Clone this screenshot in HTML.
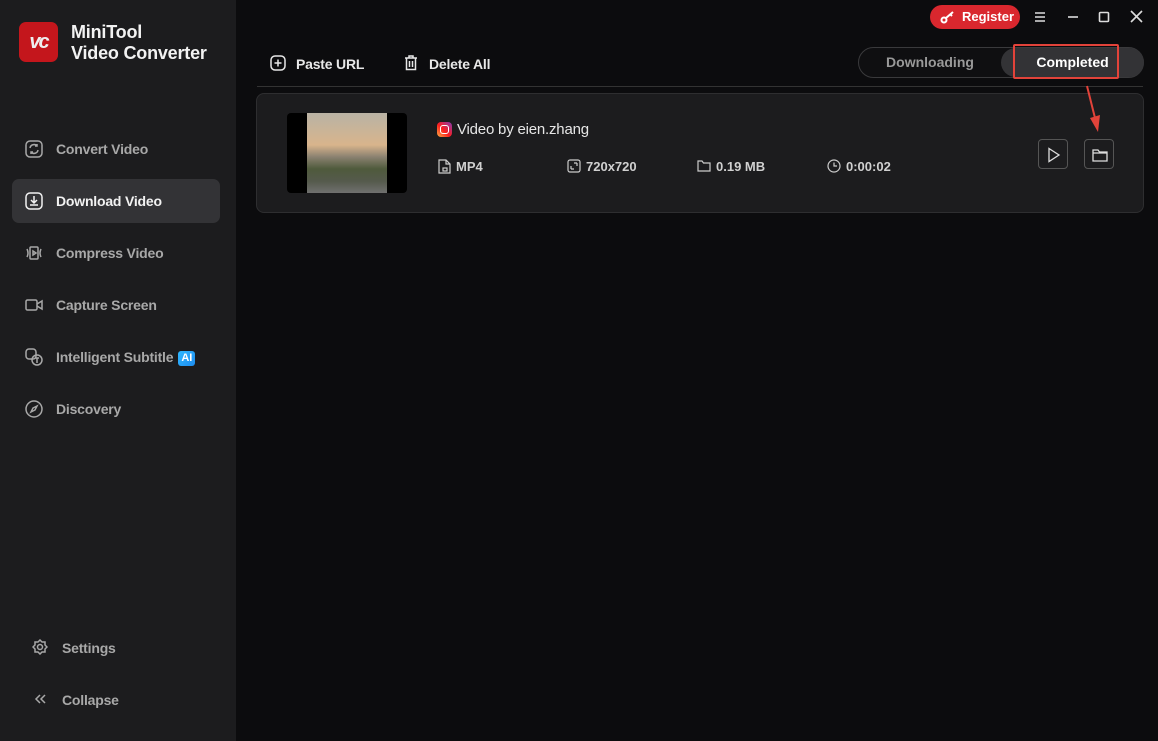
<!DOCTYPE html>
<html><head><meta charset="utf-8"><style>
*{margin:0;padding:0;box-sizing:border-box}
body{width:1158px;height:741px;background:#0c0c0e;font-family:"Liberation Sans",sans-serif;position:relative;overflow:hidden;color:#ddd}
.side{position:absolute;left:0;top:0;width:236px;height:741px;background:#1c1c1e}
.logo{position:absolute;left:19px;top:22px;width:39px;height:40px;border-radius:7px;background:#c4161c;color:#eee;font-weight:bold;font-style:italic;font-size:20px;text-align:center;line-height:40px;letter-spacing:-2px}
.brand{position:absolute;left:71px;top:22px;font-size:18px;font-weight:bold;color:#f2f2f2;line-height:21px;letter-spacing:-0.2px}
.nav{position:absolute;left:12px;width:208px;height:44px;border-radius:7px;font-size:14px;font-weight:bold;color:#a8a8a8;line-height:44px;padding-left:44px;letter-spacing:-0.2px}
.nav svg{position:absolute;left:13px;top:13px}
.nav.on{background:#333336;color:#f2f2f2}
.ai{display:inline-block;background:linear-gradient(135deg,#2fb8ff,#1e8cf0);color:#fff;font-size:11px;border-radius:3px;padding:0 3px;line-height:15px;margin-left:5px;vertical-align:1px;letter-spacing:0}
.tb{position:absolute;font-size:14px;font-weight:bold;color:#e8e8e8;letter-spacing:-0.2px}
.line{position:absolute;left:257px;top:86px;width:886px;height:1px;background:#333}
.seg{position:absolute;left:858px;top:47px;width:286px;height:31px;border:1px solid #3a3a3c;border-radius:16px;background:#0f0f11}
.seg .a{position:absolute;left:0;width:142px;top:0;height:29px;line-height:29px;text-align:center;font-size:14px;font-weight:bold;color:#999}
.seg .b{position:absolute;left:142px;width:143px;top:0;height:29px;border-radius:15px;background:#333336;line-height:29px;text-align:center;font-size:14px;font-weight:bold;color:#fff}
.hl{position:absolute;left:1013px;top:44px;width:106px;height:35px;border:2px solid #e2433a;border-radius:2px}
.card{position:absolute;left:256px;top:93px;width:888px;height:120px;background:#1c1c1e;border:1px solid #2e2e30;border-radius:8px}
.thumb{position:absolute;left:30px;top:19px;width:120px;height:80px;background:#000;border-radius:4px;overflow:hidden}
.thumb .img{position:absolute;left:20px;top:0;width:80px;height:80px;background:linear-gradient(180deg,#b9b3a5 0%,#d8b48c 40%,#8a8170 55%,#4f5a3c 70%,#555a4c 85%,#707070 100%)}
.title{position:absolute;left:200px;top:27px;font-size:15px;color:#e6e6e6;letter-spacing:-0.2px}
.meta{position:absolute;top:65px;font-size:13px;font-weight:bold;color:#d0d0d0}
.btn{position:absolute;top:45px;width:30px;height:30px;border:1px solid #555;border-radius:4px}
.reg{position:absolute;left:930px;top:5px;width:90px;height:24px;border-radius:12px;background:#d9272e;color:#fff;font-size:13px;font-weight:bold;line-height:24px;padding-left:32px}
</style></head><body>
<div class="side">
<div class="logo">vc</div>
<div class="brand">MiniTool<br>Video Converter</div>
<div class="nav" style="top:127px"><svg width="18" height="18" viewBox="0 0 18 18" fill="none" stroke="#a8a8a8" stroke-width="1.5"><rect x="1" y="1" width="16" height="16" rx="4"/><path d="M5 8a4 4 0 0 1 7-2M13 10a4 4 0 0 1-7 2M12 4v2h-2M6 14v-2h2"/></svg>Convert Video</div>
<div class="nav on" style="top:179px"><svg width="18" height="18" viewBox="0 0 18 18" fill="none" stroke="#f2f2f2" stroke-width="1.5"><rect x="1" y="1" width="16" height="16" rx="4"/><path d="M9 4v7M6 8l3 3 3-3M5 13h8"/></svg>Download Video</div>
<div class="nav" style="top:231px"><svg width="18" height="18" viewBox="0 0 18 18" fill="none" stroke="#a8a8a8" stroke-width="1.5"><rect x="5" y="3" width="8" height="12" rx="1"/><path d="M8 7l3 2-3 2z M2 5q2 4 0 8M16 5q-2 4 0 8"/></svg>Compress Video</div>
<div class="nav" style="top:283px"><svg width="18" height="18" viewBox="0 0 18 18" fill="none" stroke="#a8a8a8" stroke-width="1.5"><rect x="1" y="4" width="11" height="10" rx="1.5"/><path d="M12 8l5-3v8l-5-3"/></svg>Capture Screen</div>
<div class="nav" style="top:335px"><svg width="18" height="18" viewBox="0 0 18 18" fill="none" stroke="#a8a8a8" stroke-width="1.5"><rect x="1" y="1" width="10" height="10" rx="3"/><circle cx="12" cy="12" r="5"/><path d="M10 10h4M12 10v5"/></svg>Intelligent Subtitle<span class="ai">AI</span></div>
<div class="nav" style="top:387px"><svg width="18" height="18" viewBox="0 0 18 18" fill="none" stroke="#a8a8a8" stroke-width="1.5"><circle cx="9" cy="9" r="8"/><path d="M12 6l-2 4-4 2 2-4z"/></svg>Discovery</div>
<div class="nav" style="top:626px;padding-left:50px"><svg style="left:20px" width="16" height="16" viewBox="0 0 16 16" fill="none" stroke="#a8a8a8" stroke-width="1.5"><circle cx="8" cy="8" r="2.5"/><path d="M8 1l2 2h3v3l2 2-2 2v3h-3l-2 2-2-2H3v-3L1 8l2-2V3h3z"/></svg>Settings</div>
<div class="nav" style="top:678px;padding-left:50px"><svg style="left:20px" width="16" height="16" viewBox="0 0 16 16" fill="none" stroke="#a8a8a8" stroke-width="1.5"><path d="M8 4L4 8l4 4M13 4L9 8l4 4"/></svg>Collapse</div>
</div>
<div class="reg"><svg style="position:absolute;left:10px;top:5px" width="15" height="14" viewBox="0 0 15 14" fill="none" stroke="#fff" stroke-width="2"><circle cx="4" cy="10" r="2.5"/><path d="M6 8l7-6M10 4l2 2"/></svg>Register</div>
<svg style="position:absolute;left:1034px;top:11px" width="12" height="12" stroke="#ddd" stroke-width="1.6"><path d="M1 2h10M1 6h10M1 10h10"/></svg>
<svg style="position:absolute;left:1067px;top:11px" width="12" height="12" stroke="#ddd" stroke-width="1.6"><path d="M1 6h10"/></svg>
<svg style="position:absolute;left:1098px;top:11px" width="12" height="12" fill="none" stroke="#ddd" stroke-width="1.6"><rect x="1.5" y="1.5" width="9" height="9" rx="1"/></svg>
<svg style="position:absolute;left:1130px;top:10px" width="13" height="13" stroke="#ddd" stroke-width="1.6"><path d="M1 1l11 11M12 1L1 12"/></svg>
<svg style="position:absolute;left:270px;top:55px" width="16" height="16" fill="none" stroke="#e8e8e8" stroke-width="1.5"><rect x="1" y="1" width="14" height="14" rx="4"/><path d="M8 4.5v7M4.5 8h7"/></svg>
<div class="tb" style="left:296px;top:56px">Paste URL</div>
<svg style="position:absolute;left:404px;top:55px" width="14" height="16" fill="none" stroke="#e8e8e8" stroke-width="1.5"><path d="M1 3h12M5 3V1h4v2M2.5 3v11.5h9V3M5.5 6v6M8.5 6v6"/></svg>
<div class="tb" style="left:429px;top:56px">Delete All</div>
<div class="seg"><div class="a">Downloading</div><div class="b">Completed</div></div>
<div class="hl"></div>
<div class="line"></div>
<div class="card">
<div class="thumb"><div class="img"></div></div>
<div style="position:absolute;left:180px;top:28px;width:15px;height:15px;border-radius:4px;background:linear-gradient(45deg,#fcb045,#fd1d1d 45%,#833ab4)"><div style="position:absolute;left:3px;top:3px;width:9px;height:9px;border:1.5px solid #fff;border-radius:3px"></div></div>
<div class="title">Video by eien.zhang</div>
<svg style="position:absolute;left:181px;top:65px" width="13" height="15" fill="none" stroke="#ccc" stroke-width="1.2"><path d="M1 1h7l4 4v9H1z M8 1v4h4"/><rect x="5" y="9" width="4" height="3"/></svg>
<div class="meta" style="left:199px">MP4</div>
<svg style="position:absolute;left:310px;top:65px" width="14" height="14" fill="none" stroke="#ccc" stroke-width="1.2"><rect x="1" y="1" width="12" height="12" rx="2"/><path d="M4 10V7M4 10h3M10 4v3M10 4H7"/></svg>
<div class="meta" style="left:329px">720x720</div>
<svg style="position:absolute;left:440px;top:65px" width="14" height="13" fill="none" stroke="#ccc" stroke-width="1.2"><path d="M1 2h4l1.5 2H13v8H1z"/></svg>
<div class="meta" style="left:459px">0.19 MB</div>
<svg style="position:absolute;left:570px;top:65px" width="14" height="14" fill="none" stroke="#ccc" stroke-width="1.2"><circle cx="7" cy="7" r="6"/><path d="M7 3.5V7h3"/></svg>
<div class="meta" style="left:589px">0:00:02</div>
<div class="btn" style="left:781px"><svg style="position:absolute;left:8px;top:7px" width="14" height="16" fill="none" stroke="#ddd" stroke-width="1.3"><path d="M2 1.5l10 6.5-10 6.5z"/></svg></div>
<div class="btn" style="left:827px"><svg style="position:absolute;left:7px;top:8px" width="16" height="14" fill="none" stroke="#ddd" stroke-width="1.3"><path d="M1 2h5l1.5 2H15v9H1z M1 5h14"/></svg></div>
</div>
<svg style="position:absolute;left:1080px;top:84px" width="25" height="52"><path d="M7 2L16 38" stroke="#e2433a" stroke-width="2"/><path d="M10 34l10 -3 -2 17z" fill="#e2433a"/></svg>
</body></html>
